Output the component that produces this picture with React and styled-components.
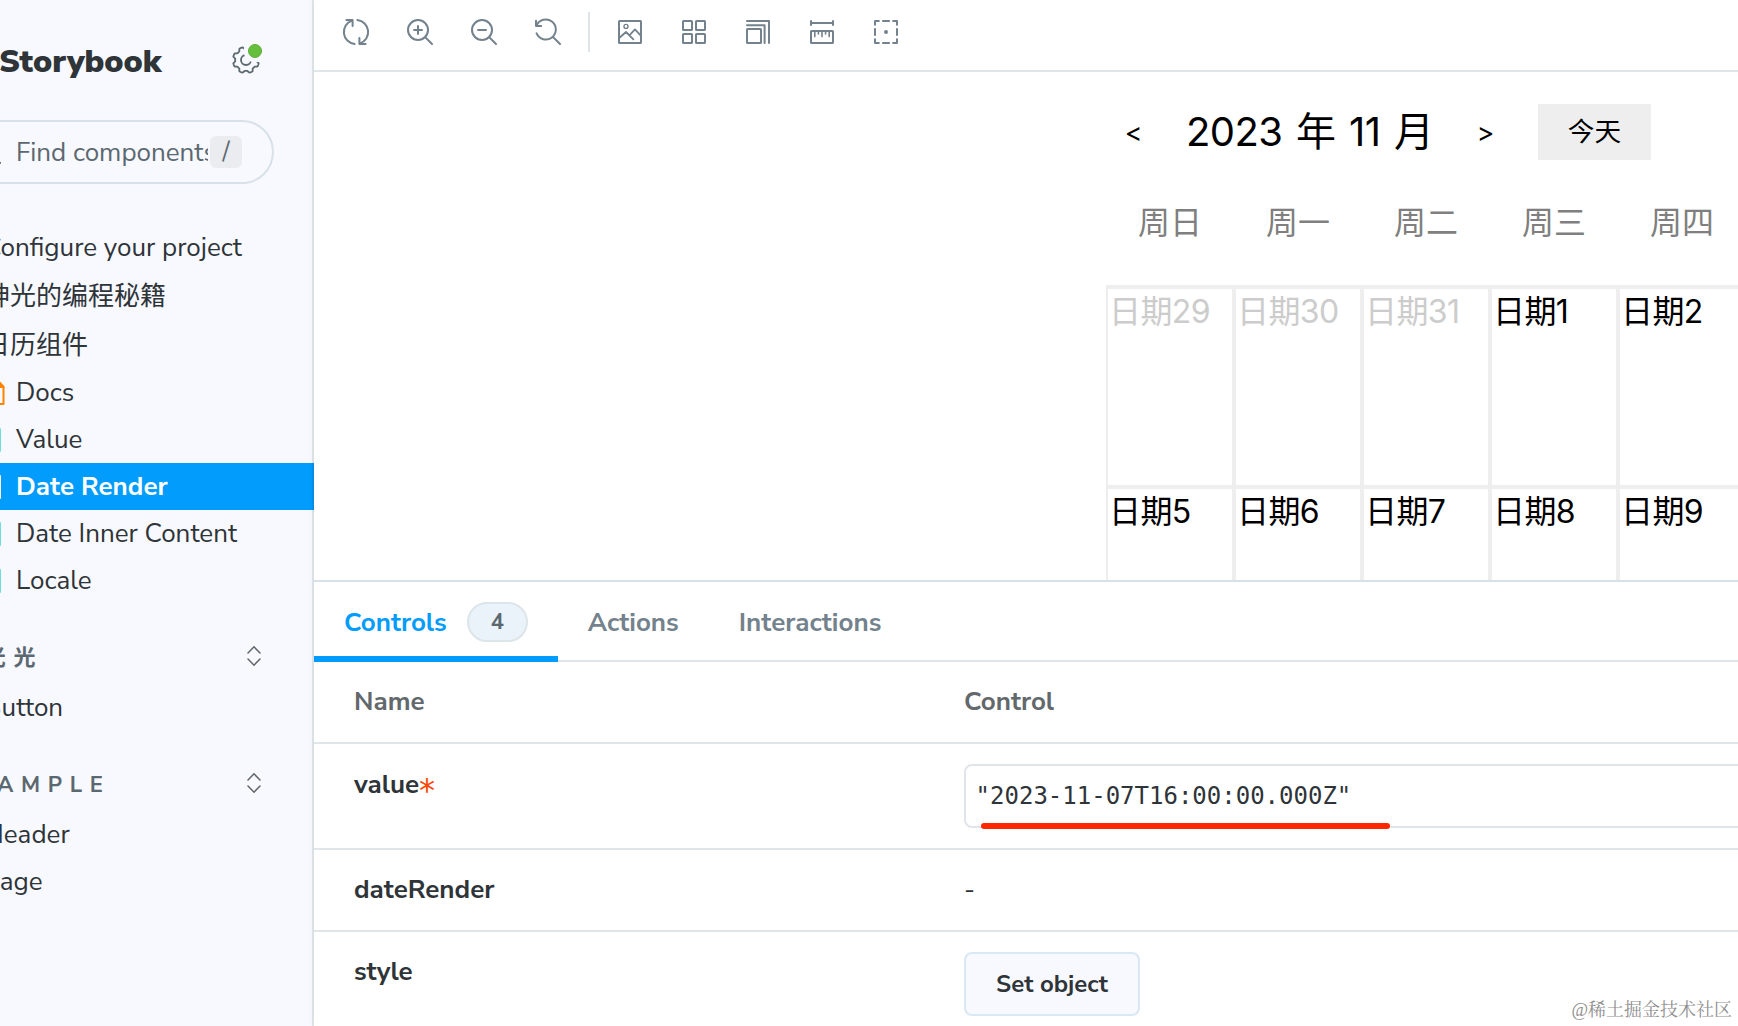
import React from 'react';
import styled, { createGlobalStyle, css } from 'styled-components';

const ui = '"Nunito Sans", Lato, "Noto Sans CJK SC", sans-serif';
const preview = 'Inter, "Noto Sans CJK SC", sans-serif';
const line = '#e0e5ea';
const ink = '#2e3438';
const muted = '#5c6870';
const icon = '#73828c';
const blue = '#029cfd';

const Global = createGlobalStyle`
  * { box-sizing: border-box; }
  body { margin: 0; background: #fff; overflow: hidden; }
`;

const Page = styled.div`
  display: flex;
  width: 100%;
  height: 100vh;
  overflow: hidden;
  font-family: ${ui};
  font-size: 26px;
  color: ${ink};
`;

/* Sidebar */
const Sidebar = styled.aside`
  flex: 0 0 314px;
  overflow: hidden;
  background: #f7f9fe;
`;
const SidebarInner = styled.div`
  margin-left: -46px;
  padding-top: 27px;
`;
const Brand = styled.header`
  display: flex;
  align-items: center;
  justify-content: space-between;
  height: 64px;
  padding: 0 54px 0 45px;
`;
const BrandName = styled.div`
  font-size: 32px;
  font-weight: 900;
  line-height: 64px;
  padding-top: 6px;
`;
const Settings = styled.div`
  position: relative;
  width: 28px;
  height: 28px;
  margin-top: 2px;
  svg { display: block; }
`;
const Notice = styled.span`
  position: absolute;
  top: -2px;
  right: -2px;
  width: 14px;
  height: 14px;
  border-radius: 50%;
  background: #66bf3c;
  border: 1px solid #5cae37;
`;
const Search = styled.div`
  display: flex;
  align-items: center;
  height: 64px;
  margin: 29px 40px 40px 0;
  padding: 0 30px 0 19px;
  border: 2px solid #d9e1e8;
  border-radius: 32px;
  svg { flex: none; }
`;
const Placeholder = styled.span`
  flex: 0 0 192px;
  margin: 2px 2px 0 13px;
  overflow: hidden;
  white-space: nowrap;
  line-height: 60px;
  color: ${muted};
`;
const Key = styled.kbd`
  flex: 0 0 32px;
  height: 32px;
  border-radius: 6px;
  background: #eaecf0;
  color: ${muted};
  font: 25px/33px ${ui};
  text-align: center;
`;
const Item = styled.div`
  display: flex;
  align-items: center;
  height: ${p => p.$tall ? 49 : 47}px;
  padding-left: ${p => p.$story ? 29 : 30}px;
  white-space: nowrap;
  ${p => p.$active && css`
    background: ${blue};
    color: #fff;
    font-weight: 700;
  `}
`;
const ItemLabel = styled.span`
  align-self: flex-start;
  line-height: 48px;
`;
const ItemIcon = styled.span`
  display: flex;
  width: 33px;
`;
const Heading = styled.div`
  display: flex;
  align-items: center;
  justify-content: space-between;
  height: 40px;
  margin: 32px 0 8px;
  padding-right: 53px;
  color: ${muted};
`;
const HeadingLabel = styled.span`
  font-size: 22px;
  font-weight: 700;
  line-height: 42px;
  padding-top: 4px;
  letter-spacing: 7.7px;
`;

/* Main column */
const Main = styled.main`
  position: relative;
  flex: 1;
  min-width: 0;
  display: flex;
  flex-direction: column;
  background: #fff;
  box-shadow: -2px 0 0 rgba(40, 60, 80, 0.1), 0 0 6px rgba(40, 60, 80, 0.09);
`;
const Toolbar = styled.div`
  display: flex;
  gap: 36px;
  flex: 0 0 72px;
  padding: 18px 28px 0;
  border-bottom: 2px solid ${line};
  svg { display: block; flex: none; }
`;
const Separator = styled.i`
  width: 2px;
  height: 40px;
  margin: -6px -10px 0;
  background: ${line};
`;
const Canvas = styled.section`
  flex: 0 0 508px;
  overflow: hidden;
  padding: 32px 0 0 792px;
  font-family: ${preview};
  color: #000;
`;
const MonthBar = styled.div`
  display: flex;
  align-items: center;
  height: 56px;
`;
const Arrow = styled.span`
  flex: 0 0 55px;
  text-align: center;
  font-size: 26.67px;
  line-height: 56px;
`;
const Month = styled.span`
  flex: 0 0 297px;
  padding-left: 25px;
  font-size: 40px;
  line-height: 56px;
  letter-spacing: -0.6px;
  word-spacing: 3px;
  white-space: nowrap;
`;
const Today = styled.button`
  flex: 0 0 113px;
  height: 56px;
  margin-left: 25px;
  padding: 0 0 2px;
  border: 0;
  background: #eee;
  color: #000;
  font: 26.67px/54px ${preview};
`;
const Week = styled.div`
  display: grid;
  grid-template-columns: repeat(7, 128px);
  ${p => p.$head && css`
    width: 896px;
    border-bottom: 2px solid #eee;
  `}
`;
const WeekName = styled.span`
  text-align: center;
  font-size: 32px;
  line-height: 125px;
  color: #7f7f7f;
`;
const Day = styled.div`
  height: 200px;
  padding-left: 1px;
  border: 2px solid #eee;
  font-size: 32px;
  line-height: 45px;
  letter-spacing: -0.6px;
  color: ${p => p.$outside ? '#ccc' : '#000'};
`;

/* Addons panel */
const Panel = styled.section`
  flex: 1;
  min-height: 0;
  overflow: hidden;
  border-top: 2px solid #d9e1e8;
`;
const Tabs = styled.div`
  display: flex;
  height: 80px;
  border-bottom: 2px solid ${line};
`;
const Tab = styled.div`
  display: flex;
  align-items: center;
  height: 80px;
  padding: 8px 30px 0;
  border-bottom: 6px solid ${p => p.$active ? blue : 'transparent'};
  color: ${p => p.$active ? blue : icon};
  font-weight: 700;
  line-height: 70px;
`;
const Count = styled.span`
  width: 61px;
  height: 40px;
  margin: -2px 0 0 20px;
  border: 2px solid #dce5ea;
  border-radius: 20px;
  background: #eaf3f9;
  color: ${muted};
  font-size: 22px;
  line-height: 36px;
  text-align: center;
`;
const Row = styled.div`
  display: grid;
  grid-template-columns: 610px 1fr;
  height: ${p => p.$height}px;
  padding-left: 40px;
  border-bottom: 2px solid ${line};
`;
const Name = styled.span`
  font-weight: 700;
  line-height: ${p => p.$required ? 82 : 80}px;
  ${p => p.$head && css`color: #62686b;`}
`;
const Required = styled.span`
  color: #ff4400;
  font: 400 32px/0 "DejaVu Sans", sans-serif;
  vertical-align: -8px;
`;
const Value = styled.div`
  padding-top: ${p => p.$plain ? 0 : 20}px;
  line-height: 80px;
`;
const Field = styled.div`
  position: relative;
  width: 900px;
  height: 64px;
  padding-left: 9.6px;
  border: 2px solid ${line};
  border-radius: 8px;
  font: 24px/60px "DejaVu Sans Mono", monospace;
`;
const Marker = styled.i`
  position: absolute;
  left: 15px;
  bottom: -3px;
  width: 409px;
  height: 6px;
  border-radius: 3px;
  background: #ff2600;
`;
const SetButton = styled.button`
  display: block;
  width: 176px;
  height: 64px;
  padding: 0;
  border: 2px solid #d9e8f2;
  border-radius: 8px;
  background: #f7f9fe;
  color: ${ink};
  font: 700 24px/60px ${ui};
`;
const Watermark = styled.span`
  position: absolute;
  right: 6px;
  bottom: 3px;
  font: 400 18px/26px "Liberation Serif", "Noto Serif CJK SC", "Noto Sans CJK SC", serif;
  color: #909090;
`;

const Stroke = ({ children }) => (
  <svg width="28" height="28" viewBox="0 0 14 14" fill="none" stroke={icon} strokeLinecap="round" strokeLinejoin="round">
    {children}
  </svg>
);
const Lens = () => <><circle cx="6" cy="6" r="5" /><path d="M9.7 9.7 13 13" /></>;

const SyncIcon = () => (
  <Stroke>
    <path d="M2.2 1h3.1v3M5 1.3A6 6 0 0 0 6.3 12.95M11.8 13H8.7v-3M9 12.7A6 6 0 0 0 7.7 1.05" />
  </Stroke>
);
const ZoomInIcon = () => <Stroke><Lens /><path d="M6 4v4M4 6h4" /></Stroke>;
const ZoomOutIcon = () => <Stroke><Lens /><path d="M4 6h4" /></Stroke>;
const ZoomResetIcon = () => (
  <Stroke><path d="M1 1.4V4h2.6M1.3 3.8A5 5 0 1 1 1.3 7.7M9.7 9.7 13 13" /></Stroke>
);
const PhotoIcon = () => (
  <Stroke>
    <rect x="1.5" y="1.5" width="11" height="11" rx=".3" />
    <circle cx="5" cy="4.2" r="1" strokeWidth=".7" />
    <path d="M1.6 10 5 7l3.7 3.7M6.9 8.4l2.6-2.7 3 3.2" strokeWidth=".9" />
  </Stroke>
);
const GridIcon = () => (
  <Stroke>
    {[[1.5, 1.5], [8, 1.5], [1.5, 8], [8, 8]].map(([x, y]) => (
      <rect key={`${x}-${y}`} x={x} y={y} width="4.5" height="4.5" rx=".3" />
    ))}
  </Stroke>
);
const GrowIcon = () => (
  <Stroke><path d="M1.5 1.5h11v11M1.5 3.6h8.8v8.9" /><rect x="1.5" y="5.5" width="7" height="7" rx=".3" /></Stroke>
);
const RulerIcon = () => (
  <Stroke>
    <path d="M1.5 1.5v2M12.5 1.5v2M1.5 2.5h11" />
    <rect x="1.5" y="6.5" width="11" height="6" rx=".3" />
    <path d="M3.4 7v2.3M7 7v2.3M10.6 7v2.3M5.2 7v1M8.8 7v1" strokeWidth=".8" />
  </Stroke>
);
const OutlineIcon = () => (
  <Stroke>
    <path d="M1.5 3.8V1.5h2.3M10.2 1.5h2.3v2.3M12.5 10.2v2.3h-2.3M3.8 12.5H1.5v-2.3M5.1 1.5h3.8M5.1 12.5h3.8M1.5 5.1v3.8M12.5 5.1v3.8" strokeLinecap="butt" />
    <circle cx="7" cy="7" r="1" fill={icon} stroke="none" />
  </Stroke>
);

const gearPath = Array.from({ length: 96 }, (_, i) => {
  const a = (i / 96) * Math.PI * 2;
  const wave = Math.max(-1, Math.min(1, -1.9 * Math.cos(a * 8)));
  const r = 12 + wave * 1.15;
  return `${i ? 'L' : 'M'}${(14 + r * Math.cos(a)).toFixed(2)} ${(14 + r * Math.sin(a)).toFixed(2)}`;
}).join('') + 'Z';

const GearIcon = () => (
  <svg width="28" height="28" viewBox="0 0 28 28" fill="none" stroke={muted} strokeWidth="1.8" strokeLinejoin="round">
    <mask id="notice-gap" maskUnits="userSpaceOnUse" x="0" y="0" width="28" height="28">
      <path d="M0 0h28v28H0z" fill="#fff" stroke="none" />
      <circle cx="23" cy="5" r="11.4" fill="#000" stroke="none" />
    </mask>
    <g mask="url(#notice-gap)">
      <path d={gearPath} />
      <circle cx="14" cy="14" r="5" />
    </g>
  </svg>
);
const SearchIcon = () => (
  <svg width="28" height="28" viewBox="0 0 28 28" fill="none" stroke={muted} strokeWidth="2" strokeLinecap="round">
    <circle cx="12" cy="12" r="10" /><path d="m19.4 19.4 5.6 5.6" />
  </svg>
);
const DocsIcon = () => (
  <svg width="22" height="24" viewBox="0 0 22 24" fill="none" stroke="#ff8300" strokeWidth="2" strokeLinejoin="round">
    <path d="M2 1h14l4.5 5v17H2z" /><path d="M16 1.5V6h4.5z" fill="#ff8300" />
  </svg>
);
const StoryIcon = ({ color }) => (
  <svg width="18" height="24" viewBox="0 0 18 24" fill="none" stroke={color} strokeWidth="2" strokeLinejoin="round">
    <path d="M1 1h16v22l-8-6-8 6z" />
  </svg>
);
const ExpandIcon = () => (
  <svg width="14" height="22" viewBox="0 0 14 22" fill="none" stroke="#5f666b" strokeWidth="1.5" strokeLinecap="round">
    <path d="m1 8 6-6.2L13 8M1 14l6 6.2 6-6.2" />
  </svg>
);

const stories = [
  { label: 'Docs', docs: true },
  { label: 'Value' },
  { label: 'Date Render', active: true },
  { label: 'Date Inner Content' },
  { label: 'Locale' },
];
const weekNames = ['周日', '周一', '周二', '周三', '周四', '周五', '周六'];
const days = [29, 30, 31, 1, 2, 3, 4, 5, 6, 7, 8, 9, 10, 11];

export default function App() {
  return (
    <Page>
      <Global />
      <Sidebar>
        <SidebarInner>
          <Brand>
            <BrandName>Storybook</BrandName>
            <Settings><GearIcon /><Notice /></Settings>
          </Brand>
          <Search>
            <SearchIcon />
            <Placeholder>Find components</Placeholder>
            <Key>/</Key>
          </Search>
          <Item $tall><ItemLabel>Configure your project</ItemLabel></Item>
          <Item $tall><ItemLabel>神光的编程秘籍</ItemLabel></Item>
          <Item><ItemLabel>日历组件</ItemLabel></Item>
          {stories.map(s => (
            <Item key={s.label} $story $active={s.active}>
              <ItemIcon>{s.docs ? <DocsIcon /> : <StoryIcon color={s.active ? '#fff' : '#6fdede'} />}</ItemIcon>
              <ItemLabel>{s.label}</ItemLabel>
            </Item>
          ))}
          <Heading><HeadingLabel>神光光</HeadingLabel><ExpandIcon /></Heading>
          <Item><ItemLabel>Button</ItemLabel></Item>
          <Heading><HeadingLabel>EXAMPLE</HeadingLabel><ExpandIcon /></Heading>
          <Item><ItemLabel>Header</ItemLabel></Item>
          <Item><ItemLabel>Page</ItemLabel></Item>
        </SidebarInner>
      </Sidebar>
      <Main>
        <Toolbar>
          <SyncIcon /><ZoomInIcon /><ZoomOutIcon /><ZoomResetIcon />
          <Separator />
          <PhotoIcon /><GridIcon /><GrowIcon /><RulerIcon /><OutlineIcon />
        </Toolbar>
        <Canvas>
          <MonthBar>
            <Arrow>&lt;</Arrow>
            <Month>2023 年 11 月</Month>
            <Arrow>&gt;</Arrow>
            <Today>今天</Today>
          </MonthBar>
          <Week $head>{weekNames.map(n => <WeekName key={n}>{n}</WeekName>)}</Week>
          <Week>{days.map(d => <Day key={d} $outside={d > 28}>日期{d}</Day>)}</Week>
        </Canvas>
        <Panel>
          <Tabs>
            <Tab $active>Controls<Count>4</Count></Tab>
            <Tab>Actions</Tab>
            <Tab>Interactions</Tab>
          </Tabs>
          <Row $height={82}><Name $head>Name</Name><Name $head>Control</Name></Row>
          <Row $height={106}>
            <Name $required>value<Required>*</Required></Name>
            <Value><Field>"2023-11-07T16:00:00.000Z"<Marker /></Field></Value>
          </Row>
          <Row $height={82}><Name>dateRender</Name><Value $plain>-</Value></Row>
          <Row $height={106}>
            <Name>style</Name>
            <Value><SetButton>Set object</SetButton></Value>
          </Row>
        </Panel>
        <Watermark>@稀土掘金技术社区</Watermark>
      </Main>
    </Page>
  );
}
